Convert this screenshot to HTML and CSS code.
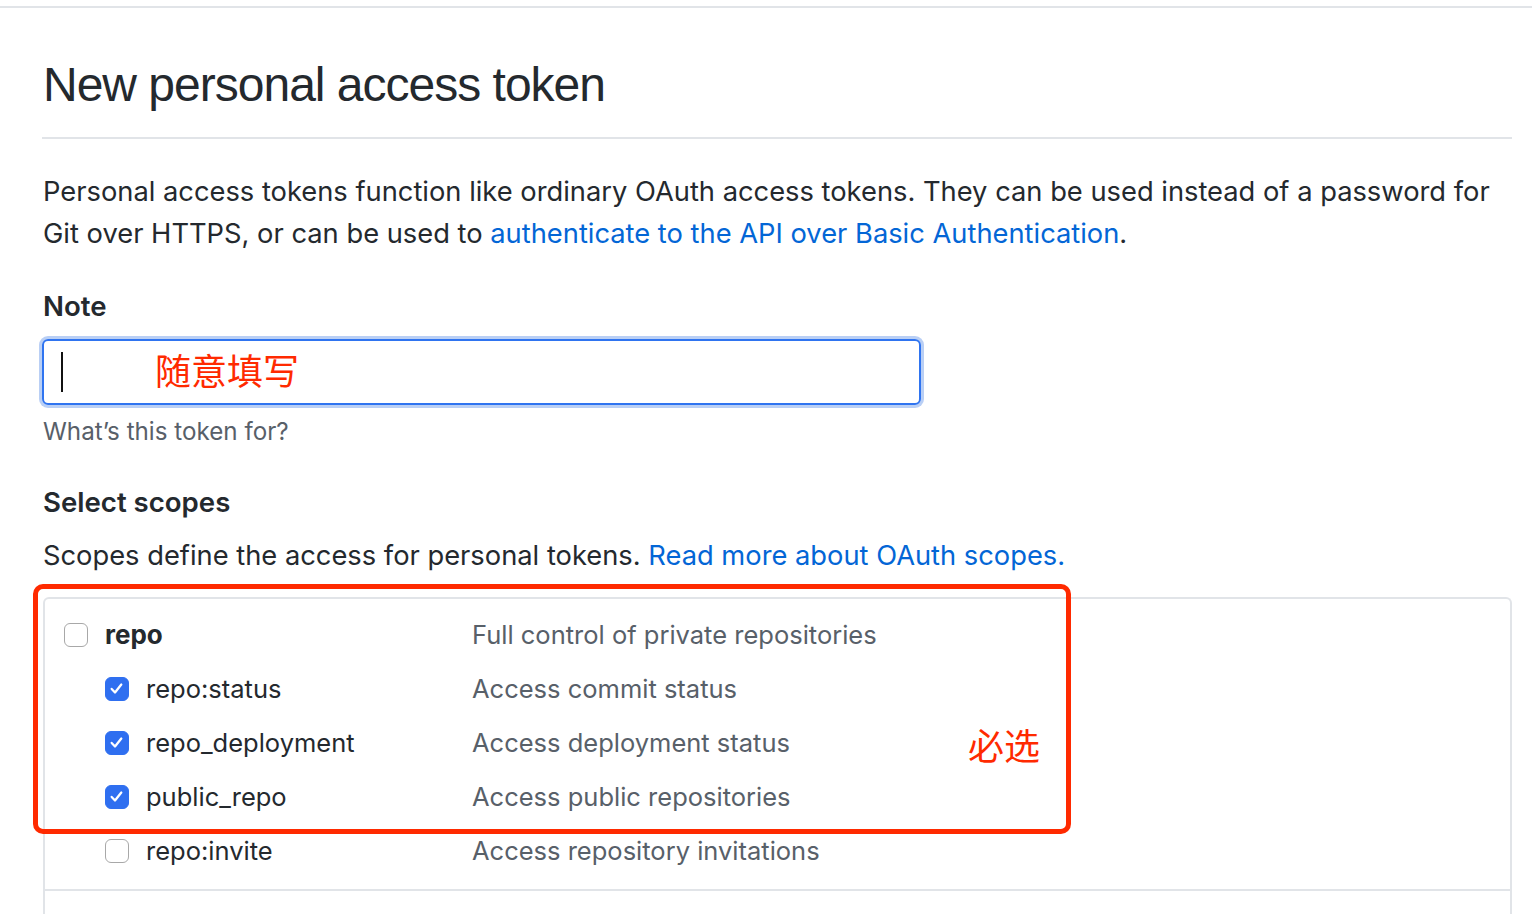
FILE: index.html
```html
<!DOCTYPE html>
<html lang="en">
<head>
<meta charset="utf-8">
<title>New personal access token</title>
<link rel="stylesheet" href="styles.css">
</head>
<body>
<div class="topbar"></div>
<main class="page">
  <h2 class="title">New personal access token</h2>
  <p class="intro">Personal access tokens function like ordinary OAuth access tokens. They can be used instead of a password for Git over HTTPS, or can be used to <a href="#">authenticate to the API over Basic Authentication</a>.</p>

  <label class="label" for="note">Note</label>
  <div class="input-wrap">
    <div class="input" id="note"><span class="caret"></span></div>
    <span class="anno anno-input">随意填写</span>
  </div>
  <p class="hint">What’s this token for?</p>

  <h3 class="label scopes-title">Select scopes</h3>
  <p class="scopes-desc">Scopes define the access for personal tokens. <a href="#">Read more about OAuth scopes.</a></p>

  <div class="scopes-wrap">
    <div class="scopes">
      <div class="group">
        <div class="row">
          <div class="name top"><span class="cb"></span><b>repo</b></div>
          <div class="desc">Full control of private repositories</div>
        </div>
        <div class="row">
          <div class="name sub"><span class="cb on"><svg viewBox="0 0 24 24"><path d="M6.5 12.5l3.8 4 7.2-9" /></svg></span>repo:status</div>
          <div class="desc">Access commit status</div>
        </div>
        <div class="row">
          <div class="name sub"><span class="cb on"><svg viewBox="0 0 24 24"><path d="M6.5 12.5l3.8 4 7.2-9" /></svg></span>repo_deployment</div>
          <div class="desc">Access deployment status</div>
        </div>
        <div class="row">
          <div class="name sub"><span class="cb on"><svg viewBox="0 0 24 24"><path d="M6.5 12.5l3.8 4 7.2-9" /></svg></span>public_repo</div>
          <div class="desc">Access public repositories</div>
        </div>
        <div class="row">
          <div class="name sub"><span class="cb"></span>repo:invite</div>
          <div class="desc">Access repository invitations</div>
        </div>
      </div>
      <div class="group next"></div>
    </div>
    <div class="redbox"></div>
    <span class="anno anno-req">必选</span>
  </div>
</main>
</body>
</html>
```

FILE: styles.css
```css
html, body {
  margin: 0;
  padding: 0;
  background: #fff;
}
body {
  font-family: Inter, "Noto Sans", "Noto Sans CJK SC", sans-serif;
  color: #24292e;
  font-size: 27.3px;
  line-height: 42px;
  overflow: hidden;
  height: 914px;
}
.topbar {
  height: 6px;
  border-bottom: 2px solid #e1e4e8;
}
.page {
  margin: 0 20px 0 42px;
}
.title {
  font-family: "Liberation Sans", Arial, sans-serif;
  font-weight: 400;
  font-size: 48px;
  letter-spacing: -1px;
  line-height: 60px;
  margin: 0;
  padding: 47px 0 22px 1px;
  border-bottom: 2px solid #e1e4e8;
}
.intro {
  margin: 32px 0 0 1px;
}
a {
  color: #0366d6;
  text-decoration: none;
}
.label {
  display: block;
  font-weight: 600;
  font-size: 27.6px;
  margin: 30px 0 0 1px;
}
.input-wrap {
  position: relative;
  margin-top: 12px;
  width: 879px;
}
.input {
  height: 62px;
  border: 2px solid #2f74f0;
  border-radius: 6px;
  box-shadow: 0 0 0 3px #b9cff5;
  display: flex;
  align-items: center;
  padding-left: 17px;
}
.caret {
  display: block;
  width: 2px;
  height: 40px;
  background: #111;
}
.anno {
  position: absolute;
  color: #ff2a00;
  font-family: "Noto Sans CJK SC", sans-serif;
  font-size: 36px;
  line-height: 40px;
  white-space: nowrap;
}
.anno-input {
  left: 113px;
  top: 10px;
}
.hint {
  margin: 9px 0 0 1px;
  font-size: 24.2px;
  line-height: 36px;
  color: #586069;
}
.scopes-title {
  margin-top: 31px;
}
.scopes-desc {
  margin: 12px 0 0 1px;
}
.scopes-wrap {
  position: relative;
  margin-top: 20px;
  margin-left: 1px;
  font-size: 25.5px;
}
.scopes {
  border: 2px solid #e1e4e8;
  border-bottom: none;
  border-radius: 6px 6px 0 0;
  height: 400px;
}
.group {
  padding: 9px 0 11px;
}
.group.next {
  border-top: 2px solid #e1e4e8;
}
.row {
  display: flex;
  align-items: center;
  height: 54px;
}
.name {
  width: 427px;
  display: flex;
  align-items: center;
  gap: 17px;
  box-sizing: border-box;
  white-space: nowrap;
}
.name.top {
  padding-left: 19px;
}
.name.sub {
  padding-left: 60px;
}
.name b {
  font-weight: 700;
  font-size: 26px;
}
.desc {
  color: #586069;
}
.cb {
  width: 24px;
  height: 24px;
  box-sizing: border-box;
  border: 1.5px solid #a8a8a8;
  border-radius: 6px;
  background: #fff;
  flex: none;
  display: flex;
}
.cb.on {
  background: #2f6ff0;
  border-color: #2f6ff0;
}
.cb svg {
  width: 21px;
  height: 21px;
  fill: none;
  stroke: #fff;
  stroke-width: 2.6;
  stroke-linecap: round;
  stroke-linejoin: round;
}
.redbox {
  position: absolute;
  left: -10px;
  top: -13px;
  width: 1038px;
  height: 250px;
  box-sizing: border-box;
  border: 5px solid #ff2a00;
  border-radius: 10px;
}
.anno-req {
  left: 925px;
  top: 127px;
}
```
